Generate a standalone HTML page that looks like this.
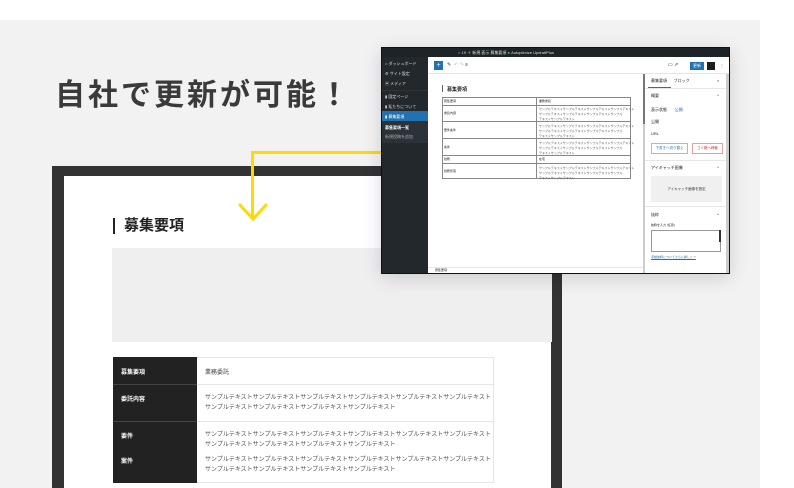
<!DOCTYPE html>
<html><head><meta charset="utf-8">
<style>
*{margin:0;padding:0;box-sizing:border-box}
html,body{width:794px;height:488px;overflow:hidden}
body{background:#fff;position:relative;font-family:"Liberation Sans","Noto Sans CJK JP",sans-serif;color:#333}
.a{position:absolute}
.t{font-size:4px;line-height:5px;color:#222;white-space:nowrap}
</style></head><body>
<div class="a" style="left:0;top:20px;width:760px;height:468px;background:#f2f2f2"></div>
<div class="a" style="left:55px;top:76px;font-size:30px;font-weight:bold;letter-spacing:3px;color:#3a3a3a;line-height:40px;font-family:'Liberation Sans','Noto Sans CJK JP',sans-serif">自社で更新が可能！</div>

<!-- big monitor -->
<div class="a" style="left:52px;top:166px;width:510px;height:322px;background:#333"></div>
<div class="a" style="left:64px;top:176px;width:487px;height:312px;background:#fff"></div>
<div class="a" style="left:113px;top:218px;width:2px;height:16px;background:#222"></div>
<div class="a" style="left:124px;top:216px;font-size:15px;font-weight:bold;color:#222;line-height:20px">募集要項</div>
<div class="a" style="left:112px;top:248px;width:440px;height:94px;background:#efefef"></div>
<div class="a" style="left:113px;top:357px;width:381px;height:126px;border:1px solid #e4e4e4;background:#fff"></div>
<div class="a" style="left:113px;top:357px;width:84px;height:126px;background:#222"></div>
<div class="a" style="left:113px;top:384px;width:381px;height:1px;background:#e6e6e6"></div>
<div class="a" style="left:113px;top:421px;width:381px;height:1px;background:#e6e6e6"></div>
<div class="a" style="left:113px;top:384px;width:84px;height:1px;background:#444"></div>
<div class="a" style="left:113px;top:421px;width:84px;height:1px;background:#444"></div>
<div class="a" style="left:121px;top:367px;font-size:6px;color:#fff;font-weight:bold">募集要項</div>
<div class="a" style="left:121px;top:394px;font-size:6px;color:#fff;font-weight:bold">委託内容</div>
<div class="a" style="left:121px;top:431px;font-size:6px;color:#fff;font-weight:bold">要件</div>
<div class="a" style="left:121px;top:456px;font-size:6px;color:#fff;font-weight:bold">案件</div>
<div class="a" style="left:205px;top:367px;font-size:6px;color:#444">業務委託</div>
<div class="a" style="left:205px;top:393px;font-size:6px;line-height:10px;color:#555">サンプルテキストサンプルテキストサンプルテキストサンプルテキストサンプルテキストサンプルテキスト<br>サンプルテキストサンプルテキストサンプルテキストサンプルテキスト</div>
<div class="a" style="left:205px;top:430px;font-size:6px;line-height:10px;color:#555">サンプルテキストサンプルテキストサンプルテキストサンプルテキストサンプルテキストサンプルテキスト<br>サンプルテキストサンプルテキストサンプルテキストサンプルテキスト</div>
<div class="a" style="left:205px;top:455px;font-size:6px;line-height:10px;color:#555">サンプルテキストサンプルテキストサンプルテキストサンプルテキストサンプルテキストサンプルテキスト<br>サンプルテキストサンプルテキストサンプルテキストサンプルテキスト</div>

<!-- yellow arrow -->
<div class="a" style="left:251px;top:151px;width:132px;height:3px;background:#ffd900"></div>
<div class="a" style="left:251px;top:151px;width:3px;height:68px;background:#ffd900"></div>
<svg class="a" style="left:236px;top:200px" width="34" height="24"><path d="M4 5 L17 19 L30 5" fill="none" stroke="#ffd900" stroke-width="3" stroke-linecap="round"/></svg>

<!-- screenshot window -->
<div class="a" style="left:381px;top:47px;width:349px;height:227px;background:#111;box-shadow:0 4px 18px rgba(0,0,0,.15)"></div>
<div class="a" style="left:382px;top:48px;width:347px;height:9px;background:#1d2327"></div>
<div class="a t" style="left:458px;top:50px;color:#ddd;font-size:4px">○ 19 ＋ 新規 表示 募集要項 <span style="color:#6c6">●</span> Autoptimize UpdraftPlus</div>
<div class="a" style="left:382px;top:57px;width:46px;height:216px;background:#23282d"></div>
<div class="a t" style="left:385px;top:61px;color:#ddd">⌂ ダッシュボード</div>
<div class="a t" style="left:385px;top:71px;color:#ddd">⚙ サイト設定</div>
<div class="a t" style="left:385px;top:81px;color:#ddd">▣ メディア</div>
<div class="a" style="left:382px;top:90px;width:46px;height:1px;background:#333"></div>
<div class="a t" style="left:385px;top:94px;color:#ddd">▮ 固定ページ</div>
<div class="a t" style="left:385px;top:104px;color:#ddd">▮ 私たちについて</div>
<div class="a" style="left:382px;top:111px;width:46px;height:10px;background:#2271b1"></div>
<div class="a t" style="left:385px;top:114px;color:#fff">▮ 募集要項</div>
<div class="a" style="left:382px;top:121px;width:46px;height:22px;background:#2c3338"></div>
<div class="a t" style="left:385px;top:125px;color:#fff;font-weight:bold">募集要項一覧</div>
<div class="a t" style="left:385px;top:134px;color:#aaa">新規投稿を追加</div>
<div class="a" style="left:428px;top:57px;width:301px;height:216px;background:#fff"></div>
<div class="a" style="left:428px;top:73px;width:301px;height:1px;background:#e6e6e6"></div>
<div class="a" style="left:434px;top:61px;width:9px;height:9px;background:#2271b1;color:#fff;font-size:7px;line-height:9px;text-align:center">+</div>
<div class="a t" style="left:447px;top:63px;color:#333;font-size:5px">✎ &nbsp;<span style="color:#bbb">↶ ↷</span> ≡</div>
<div class="a t" style="left:668px;top:63px;color:#333;font-size:5px">▭ ⇗</div>
<div class="a" style="left:690px;top:62px;width:14px;height:8px;background:#2271b1;color:#fff;font-size:4px;line-height:8px;text-align:center">更新</div>
<div class="a" style="left:707px;top:62px;width:8px;height:8px;background:#1e1e1e"></div>
<div class="a t" style="left:720px;top:63px">⋮</div>
<div class="a" style="left:442px;top:85px;width:1px;height:7px;background:#666"></div>
<div class="a" style="left:447px;top:86px;font-size:5px;font-weight:bold;color:#222">募集要項</div>
<div class="a" style="left:442px;top:97px;width:189px;height:82px;border:1px solid #888"></div>
<div class="a" style="left:536px;top:97px;width:1px;height:82px;background:#888"></div>
<div class="a" style="left:442px;top:105px;width:189px;height:1px;background:#888"></div>
<div class="a" style="left:442px;top:121px;width:189px;height:1px;background:#888"></div>
<div class="a" style="left:442px;top:138px;width:189px;height:1px;background:#888"></div>
<div class="a" style="left:442px;top:155px;width:189px;height:1px;background:#888"></div>
<div class="a" style="left:442px;top:163px;width:189px;height:1px;background:#888"></div>
<div class="a t" style="left:444px;top:99px;font-size:3px">募集要項</div><div class="a t" style="left:539px;top:99px;font-size:3px">業務委託</div>
<div class="a t" style="left:444px;top:111px;font-size:3px">委託内容</div>
<div class="a t" style="left:444px;top:128px;font-size:3px">要件条件</div>
<div class="a t" style="left:444px;top:145px;font-size:3px">案件</div>
<div class="a t" style="left:444px;top:157px;font-size:3px">勤務</div><div class="a t" style="left:539px;top:157px;font-size:3px">在宅</div>
<div class="a t" style="left:444px;top:169px;font-size:3px">勤務形態</div>
<div class="a t" style="left:539px;top:107px;font-size:3px;line-height:5px;color:#555">サンプルテキストサンプルテキストサンプルテキストサンプルテキスト<br>サンプルテキストサンプルテキストサンプルテキストサンプル<br>テキストサンプルテキスト</div>
<div class="a t" style="left:539px;top:124px;font-size:3px;line-height:5px;color:#555">サンプルテキストサンプルテキストサンプルテキストサンプルテキスト<br>サンプルテキストサンプルテキストサンプルテキストサンプル<br>テキストサンプルテキスト</div>
<div class="a t" style="left:539px;top:141px;font-size:3px;line-height:5px;color:#555">サンプルテキストサンプルテキストサンプルテキストサンプルテキスト<br>サンプルテキストサンプルテキストサンプルテキストサンプル<br>テキストサンプルテキスト</div>
<div class="a t" style="left:539px;top:166px;font-size:3px;line-height:5px;color:#555">サンプルテキストサンプルテキストサンプルテキストサンプルテキスト<br>サンプルテキストサンプルテキストサンプルテキストサンプル<br>テキストサンプルテキスト</div>
<div class="a" style="left:428px;top:267px;width:215px;height:1px;background:#e6e6e6"></div>
<div class="a t" style="left:435px;top:268px;font-size:3px">募集要項</div>
<div class="a" style="left:643px;top:74px;width:2px;height:199px;background:#ccc"></div>
<div class="a" style="left:643px;top:74px;width:2px;height:50px;background:#777"></div>
<div class="a" style="left:726px;top:74px;width:3px;height:199px;background:#ccc"></div>
<div class="a t" style="left:651px;top:78px">募集要項 &nbsp;&nbsp;&nbsp;&nbsp; ブロック</div>
<div class="a t" style="left:717px;top:78px">×</div>
<div class="a" style="left:648px;top:87px;width:23px;height:1px;background:#2271b1"></div>
<div class="a" style="left:645px;top:88px;width:81px;height:1px;background:#e6e6e6"></div>
<div class="a t" style="left:651px;top:93px">概要</div><div class="a t" style="left:717px;top:93px">^</div>
<div class="a t" style="left:651px;top:107px">表示状態 &nbsp;&nbsp;&nbsp;&nbsp;&nbsp; <span style="color:#2271b1">公開</span></div>
<div class="a t" style="left:651px;top:119px">公開</div>
<div class="a t" style="left:651px;top:131px">URL</div>
<div class="a" style="left:651px;top:143px;width:37px;height:11px;border:1px solid #8cc3e8;color:#2271b1;font-size:3.5px;line-height:9px;text-align:center">下書きへ切り替え</div>
<div class="a" style="left:692px;top:143px;width:31px;height:11px;border:1px solid #e8a0a0;color:#c33;font-size:3.5px;line-height:9px;text-align:center">ゴミ箱へ移動</div>
<div class="a" style="left:645px;top:160px;width:81px;height:1px;background:#e6e6e6"></div>
<div class="a t" style="left:651px;top:165px">アイキャッチ画像</div><div class="a t" style="left:717px;top:165px">^</div>
<div class="a" style="left:651px;top:176px;width:71px;height:26px;background:#f0f0f0;font-size:3.5px;line-height:26px;text-align:center;color:#333">アイキャッチ画像を設定</div>
<div class="a" style="left:645px;top:206px;width:81px;height:1px;background:#e6e6e6"></div>
<div class="a t" style="left:651px;top:212px">抜粋</div><div class="a t" style="left:717px;top:212px">^</div>
<div class="a t" style="left:651px;top:223px;font-size:3px">抜粋を入力 (任意)</div>
<div class="a" style="left:651px;top:230px;width:70px;height:22px;border:1px solid #999"></div>
<div class="a" style="left:719px;top:230px;width:2px;height:12px;background:#333"></div>
<div class="a t" style="left:651px;top:255px;font-size:3px;color:#2271b1;text-decoration:underline">手動抜粋についてさらに詳しく↗</div>
</body></html>
